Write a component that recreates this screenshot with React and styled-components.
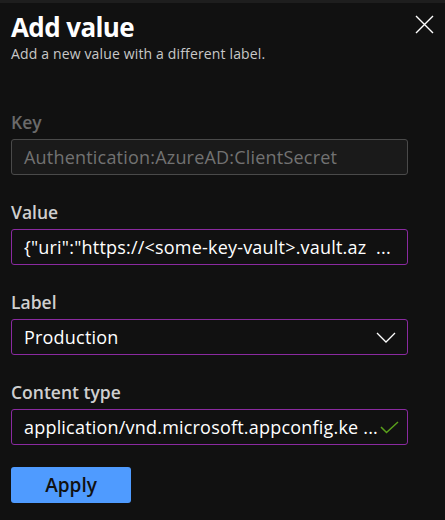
import React from "react";
import styled, { createGlobalStyle } from "styled-components";

const GlobalStyle = createGlobalStyle`
  body {
    margin: 0;
    background: #111111;
    font-family: "Open Sans", "Noto Sans", sans-serif;
  }
`;

const Panel = styled.div`
  width: 445px;
  height: 520px;
  box-sizing: border-box;
  border-top: 3px solid #1e1e1e;
  background: #111111;
  padding: 0 37px 0 11px;
  color: #ffffff;
`;

const Header = styled.div`
  display: flex;
  justify-content: space-between;
  align-items: flex-start;
  height: 107px;
`;

const TitleBlock = styled.div`
  display: flex;
  flex-direction: column;
  padding-top: 8px;
`;

const Title = styled.h1`
  margin: 0;
  font-size: 26px;
  line-height: 32px;
  font-weight: 700;
  letter-spacing: -0.6px;
`;

const SubTitle = styled.div`
  margin-top: 2px;
  font-size: 14px;
  line-height: 18px;
  color: #c8c8c8;
  letter-spacing: 0.15px;
`;

const CloseButton = styled.button`
  margin: 11px -26px 0 0;
  padding: 0;
  width: 20px;
  height: 20px;
  background: none;
  border: none;
  display: flex;
  align-items: center;
  justify-content: center;
`;

const Field = styled.div`
  display: flex;
  flex-direction: column;
  margin-bottom: 25px;
`;

const Label = styled.label`
  font-size: 17.5px;
  line-height: 24px;
  font-weight: 600;
  margin-bottom: 5px;
  color: ${({ disabled }) => (disabled ? "#6a6a6a" : "#cfcfcf")};
`;

const Box = styled.div`
  box-sizing: border-box;
  height: 36px;
  display: flex;
  align-items: center;
  justify-content: space-between;
  gap: 2px;
  padding: 0 11px 0 12px;
  border-radius: 3px;
  border: 1px solid ${({ disabled }) => (disabled ? "#4a4a4a" : "#8a2aa0")};
  background: ${({ disabled }) => (disabled ? "#1a1a1a" : "#111111")};
  color: ${({ disabled }) => (disabled ? "#727272" : "#ffffff")};
  font-size: 18px;
  letter-spacing: 0.2px;
  white-space: pre;
`;

const BoxText = styled.span`
  flex-shrink: 0;
`;

const CheckMark = styled.svg`
  flex-shrink: 0;
  margin-right: -3px;
`;

const ApplyButton = styled.button`
  margin-top: -3px;
  width: 120px;
  height: 36px;
  border: none;
  border-radius: 3px;
  background: #4f9bff;
  color: #111111;
  font-family: inherit;
  font-size: 19px;
  font-weight: 600;
`;

const Close = () => (
  <svg width="19" height="19" viewBox="0 0 19 19">
    <path d="M1 1 L18 18 M18 1 L1 18" stroke="#ffffff" strokeWidth="1.4" />
  </svg>
);

const Chevron = () => (
  <svg width="20" height="11" viewBox="0 0 20 11">
    <path d="M1 1 L10 10 L19 1" stroke="#ffffff" strokeWidth="1.3" fill="none" />
  </svg>
);

const Check = () => (
  <CheckMark width="19" height="13" viewBox="0 0 19 13">
    <path d="M1 6 L6.5 11.5 L18 1" stroke="#5aa01c" strokeWidth="1.5" fill="none" />
  </CheckMark>
);

const App = () => {
  return (
    <>
      <GlobalStyle />
      <Panel>
        <Header>
          <TitleBlock>
            <Title>Add value</Title>
            <SubTitle>Add a new value with a different label.</SubTitle>
          </TitleBlock>
          <CloseButton>
            <Close />
          </CloseButton>
        </Header>

        <Field>
          <Label disabled>Key</Label>
          <Box disabled>
            <BoxText>Authentication:AzureAD:ClientSecret</BoxText>
          </Box>
        </Field>

        <Field>
          <Label>Value</Label>
          <Box>
            <BoxText>{'{"uri":"https://<some-key-vault>.vault.az  ...'}</BoxText>
          </Box>
        </Field>

        <Field>
          <Label>Label</Label>
          <Box>
            <BoxText>Production</BoxText>
            <Chevron />
          </Box>
        </Field>

        <Field>
          <Label>Content type</Label>
          <Box>
            <BoxText>application/vnd.microsoft.appconfig.ke ...</BoxText>
            <Check />
          </Box>
        </Field>

        <ApplyButton>Apply</ApplyButton>
      </Panel>
    </>
  );
};

export default App;
